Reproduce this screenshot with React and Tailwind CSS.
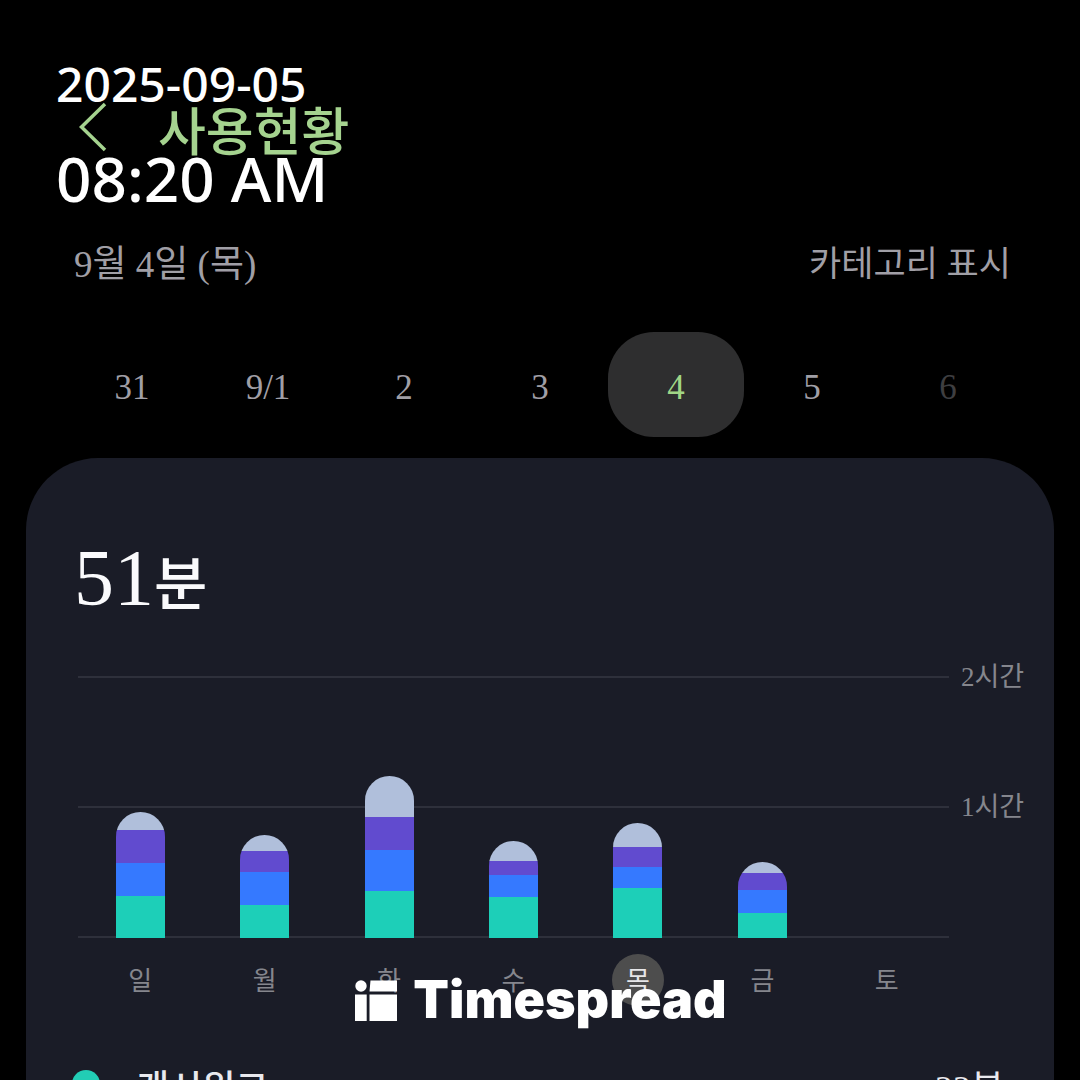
import React, { useState } from 'react';

const dates = [
  { label: '31' },
  { label: '9/1' },
  { label: '2' },
  { label: '3' },
  { label: '4' },
  { label: '5' },
  { label: '6', disabled: true },
];

// segment heights from the top of the bar down: other, purple, blue, green
const week = [
  { day: '일', parts: [18, 33, 33, 42] },
  { day: '월', parts: [16, 21, 33, 33] },
  { day: '화', parts: [41, 33, 41, 47] },
  { day: '수', parts: [20, 14, 22, 41] },
  { day: '목', parts: [24, 20, 21, 50], active: true },
  { day: '금', parts: [11, 17, 23, 25] },
  { day: '토', parts: [] },
];

const colors = ['bg-[#b0bfdb]', 'bg-[#614bcf]', 'bg-[#3579ff]', 'bg-[#1dcfb8]'];

const apps = [{ name: '캐시워크', time: '22분', color: 'bg-[#22cdb5]' }];

const GridLine = ({ label }) => (
  <div className="h-0.5 flex items-center">
    <div className="flex-1 h-0.5 bg-[#2e303b]" />
    <span className="w-[77px] pl-3 text-[27px] leading-none whitespace-nowrap text-[#85868d]">{label}</span>
  </div>
);

const Bar = ({ parts }) => (
  <div className="w-[49px] rounded-t-full overflow-hidden">
    {parts.map((h, i) => (
      <div key={i} className={colors[i]} style={{ height: h }} />
    ))}
  </div>
);

const Stamp = () => (
  <div className="absolute top-[56px] left-[56px] font-['Noto_Sans','Noto_Sans_CJK_KR',sans-serif] font-medium text-white">
    <p className="text-[48px] leading-[56px]">2025-09-05</p>
    <p className="mt-[30px] text-[62px] leading-[72px]">08:20 AM</p>
  </div>
);

const Logo = () => (
  <div className="absolute inset-x-0 bottom-12 flex justify-center items-center gap-4 text-white">
    <svg width="44" height="42" viewBox="0 0 44 42" fill="currentColor" aria-hidden="true">
      <circle cx="8" cy="7" r="5.700" />
      <path d="M17.500 1.500H44V12.500H16.500Z" />
      <path d="M2 15.500H13.700V42H2Z" />
      <path d="M16.500 15.500H44V42H16.500Z" />
    </svg>
    <span className="font-['Inter',sans-serif] font-black text-[52px] leading-[64px]">Timespread</span>
  </div>
);

export default function App() {
  const [selected, setSelected] = useState('4');

  return (
    <div className="relative h-screen overflow-hidden bg-black font-['Liberation_Serif','Noto_Sans_CJK_KR',serif]">
      <header className="pt-[96px] px-[78px] flex items-start gap-[50px] text-[#a5d38f]">
        <button type="button" aria-label="뒤로" className="pt-1 cursor-pointer">
          <svg width="30" height="52" viewBox="0 0 30 52" fill="none" stroke="currentColor" strokeWidth="3.500">
            <path d="M27 4L3.500 27L27 50" />
          </svg>
        </button>
        <h1 className="pt-2 text-[52px] leading-[60px] font-medium">사용현황</h1>
      </header>

      <div className="mt-[72px] pl-[74px] pr-[69px] flex justify-between items-center text-[#a09fa6]">
        <p className="pt-0.5 text-[37px] leading-[54px]">9월 4일 (목)</p>
        <button type="button" className="pt-0.5 text-[35px] leading-[54px] cursor-pointer">카테고리 표시</button>
      </div>

      <div className="mt-[40px] px-16 grid grid-cols-7">
        {dates.map((d) => (
          <button
            key={d.label}
            type="button"
            disabled={d.disabled}
            onClick={() => setSelected(d.label)}
            className={`h-[105px] rounded-[46px] pt-2 text-[35px] ${
              d.disabled ? 'text-[#3e3e40]' : selected === d.label ? 'bg-[#2e2e2f] text-[#a0d586]' : 'text-[#a09fa6]'
            }`}
          >
            {d.label}
          </button>
        ))}
      </div>

      <main className="mt-[21px] mx-[26px] pt-[72px] pl-[48px] pr-7 pb-10 min-h-screen rounded-t-[72px] bg-[#1a1c27]">
        <p className="text-[80px] leading-[96px] text-[#fafafc]">
          51<span className="text-[58px] font-medium">분</span>
        </p>

        <div className="relative ml-1 mt-[42px] h-[262px] flex flex-col justify-between">
          <GridLine label="2시간" />
          <GridLine label="1시간" />
          <GridLine />
          <div className="absolute inset-y-0 left-0 right-[77px] grid grid-cols-7 items-end justify-items-center">
            {week.map((w) => (
              <Bar key={w.day} parts={w.parts} />
            ))}
          </div>
        </div>

        <div className="mt-4 ml-1 pr-[77px] grid grid-cols-7 justify-items-center">
          {week.map((w) => (
            <span
              key={w.day}
              className={`size-[52px] rounded-full pt-0.5 flex items-center justify-center text-[26px] ${
                w.active ? 'bg-[#4d4d4d] text-[#e6e6e8]' : 'text-[#85868d]'
              }`}
            >
              {w.day}
            </span>
          ))}
        </div>

        <ul className="mt-[56px]">
          {apps.map((a) => (
            <li key={a.name} className="pr-[22px] flex items-start text-[36px] leading-[54px] text-[#e9e9ee]">
              <span className={`mt-2 size-7 -ml-0.5 rounded-full ${a.color}`} />
              <span className="ml-9 font-medium">{a.name}</span>
              <span className="ml-auto">{a.time}</span>
            </li>
          ))}
        </ul>
      </main>

      <Stamp />
      <Logo />
    </div>
  );
}
